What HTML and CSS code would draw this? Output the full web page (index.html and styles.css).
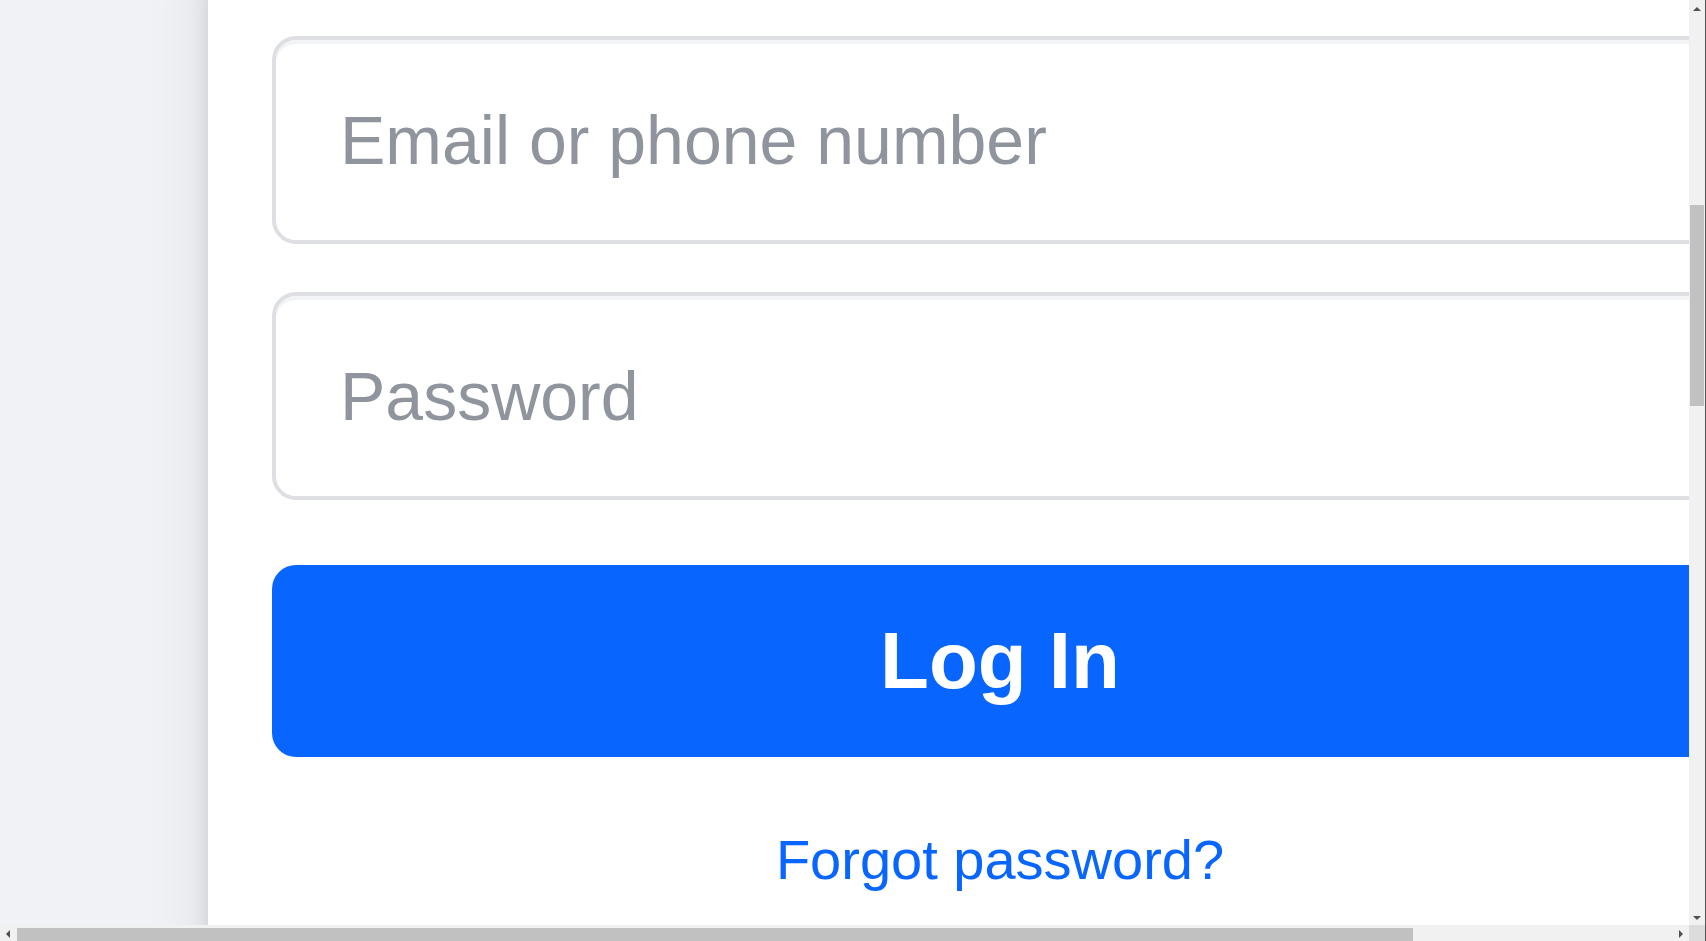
FILE: index.html
```html
<!DOCTYPE html>
<html lang="en">
<head>
<meta charset="utf-8">
<title>Log in</title>
<link rel="stylesheet" href="styles.css">
</head>
<body>
<div class="page">
  <div class="top-space"></div>
  <div class="card">
    <form class="login-form" onsubmit="return false">
      <input class="field" type="text" placeholder="Email or phone number">
      <input class="field field-gap" type="password" placeholder="Password">
      <button class="login-btn" type="button">Log In</button>
      <a class="forgot" href="#">Forgot password?</a>
      <div class="card-rest"></div>
    </form>
  </div>
</div>

<div class="sb-vbar" aria-hidden="true">
  <span class="sb-arrow sb-up"></span>
  <span class="sb-vthumb"></span>
  <span class="sb-arrow sb-down"></span>
</div>
<div class="sb-hbar" aria-hidden="true">
  <span class="sb-arrow sb-left"></span>
  <span class="sb-hthumb"></span>
  <span class="sb-arrow sb-right"></span>
</div>
<div class="sb-corner" aria-hidden="true"></div>
<div class="sb-edge" aria-hidden="true"></div>

<script src="script.js"></script>
</body>
</html>
```

FILE: styles.css
```css
html, body {
  margin: 0;
  padding: 0;
  background: #f0f2f5;
  font-family: "Liberation Sans", Arial, sans-serif;
}

.page {
  width: 2000px;
  height: 4128px;
  box-sizing: border-box;
  padding: 0 208px;
}

.top-space {
  height: 780px;
}

.card {
  width: 1584px;
  box-sizing: border-box;
  background: #ffffff;
  border-radius: 32px;
  box-shadow: 0 8px 16px rgba(0, 0, 0, 0.1), 0 32px 64px rgba(0, 0, 0, 0.1);
  padding: 131px 64px 96px;
}

.login-form {
  display: flex;
  flex-direction: column;
}

.field {
  display: block;
  width: 100%;
  height: 208px;
  box-sizing: border-box;
  margin: 0;
  border: 4px solid #dddfe2;
  border-radius: 24px;
  box-shadow: inset 0 4px 0 #f3f4f5;
  padding: 0 64px;
  font-family: inherit;
  font-size: 68px;
  color: #1c1e21;
  background: #ffffff;
  outline: none;
}

.field::placeholder {
  color: #90949c;
}

.field-gap {
  margin-top: 48px;
}

.login-btn {
  margin-top: 65px;
  height: 192px;
  width: 100%;
  border: none;
  border-radius: 24px;
  background: #0866ff;
  color: #ffffff;
  font-family: inherit;
  font-size: 80px;
  font-weight: bold;
  cursor: pointer;
}

.forgot {
  display: block;
  margin-top: 70px;
  text-align: center;
  color: #0866ff;
  font-size: 56px;
  text-decoration: none;
}

.card-rest {
  height: 440px;
}

/* classic browser scrollbars, drawn over the viewport */
.sb-vbar {
  position: fixed;
  top: 0;
  right: 1px;
  width: 16px;
  bottom: 16px;
  background: #f1f1f1;
}

.sb-hbar {
  position: fixed;
  left: 0;
  bottom: 0;
  right: 17px;
  height: 16px;
  background: #f1f1f1;
}

.sb-corner {
  position: fixed;
  right: 1px;
  bottom: 0;
  width: 16px;
  height: 16px;
  background: #dcdcdc;
}

.sb-edge {
  position: fixed;
  top: 0;
  right: 0;
  bottom: 0;
  width: 1px;
  background: #555555;
}

.sb-vthumb {
  position: absolute;
  left: 1px;
  top: 205px;
  width: 14px;
  height: 201px;
  background: #c1c1c1;
}

.sb-hthumb {
  position: absolute;
  left: 17px;
  top: 3px;
  width: 1396px;
  height: 13px;
  background: #c1c1c1;
}

.sb-arrow {
  position: absolute;
  width: 0;
  height: 0;
}

.sb-up {
  left: 4px;
  top: 7px;
  border-left: 4px solid transparent;
  border-right: 4px solid transparent;
  border-bottom: 4px solid #505050;
}

.sb-down {
  left: 4px;
  bottom: 5px;
  border-left: 4px solid transparent;
  border-right: 4px solid transparent;
  border-top: 4px solid #505050;
}

.sb-left {
  left: 6px;
  top: 5px;
  border-top: 4px solid transparent;
  border-bottom: 4px solid transparent;
  border-right: 4px solid #505050;
}

.sb-right {
  right: 6px;
  top: 5px;
  border-top: 4px solid transparent;
  border-bottom: 4px solid transparent;
  border-left: 4px solid #505050;
}
```

FILE: script.js
```js
window.scrollTo(0, 875);
```
